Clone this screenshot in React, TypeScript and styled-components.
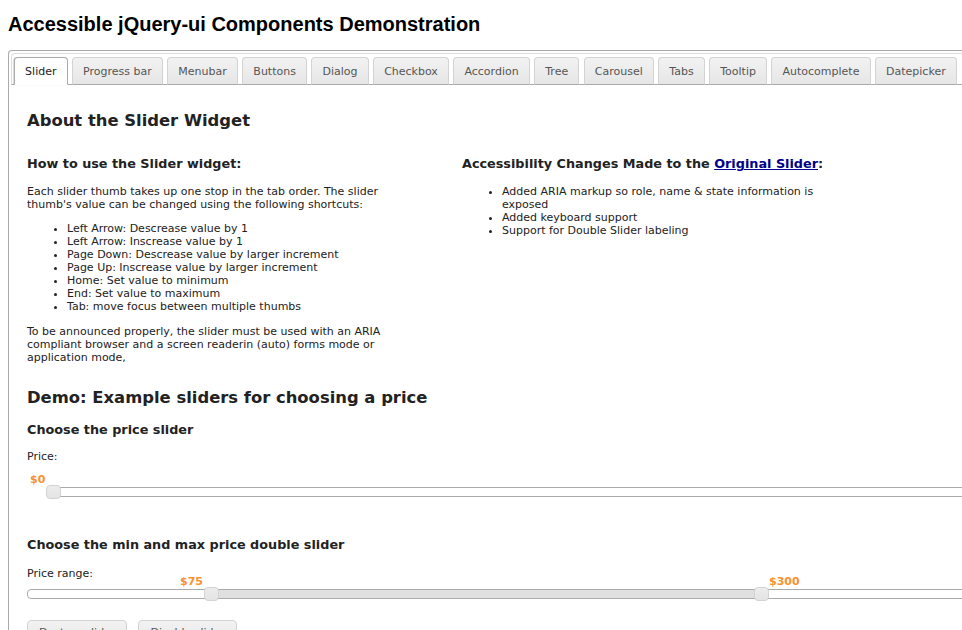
import React from 'react';
import styled, {createGlobalStyle} from 'styled-components';

const GlobalStyle = createGlobalStyle`
    html, body {
        margin: 0;
        padding: 0;
        overflow: hidden;
        background: #fff;
    }
    body {
        font-family: "DejaVu Sans", Verdana, sans-serif;
        font-size: 11px;
        line-height: 13px;
        color: #222;
    }
`

const tabNames = [
    "Slider", "Progress bar", "Menubar", "Buttons", "Dialog", "Checkbox", "Accordion",
    "Tree", "Carousel", "Tabs", "Tooltip", "Autocomplete", "Datepicker",
];

const shortcuts = [
    "Left Arrow: Descrease value by 1",
    "Left Arrow: Inscrease value by 1",
    "Page Down: Descrease value by larger increment",
    "Page Up: Inscrease value by larger increment",
    "Home: Set value to minimum",
    "End: Set value to maximum",
    "Tab: move focus between multiple thumbs",
];

const changes = [
    "Added ARIA markup so role, name & state information is exposed",
    "Added keyboard support",
    "Support for Double Slider labeling",
];

export default function App() {
    return (
        <Page>
            <GlobalStyle/>
            <Title>Accessible jQuery-ui Components Demonstration</Title>
            <TabsBox>
                <TabNav>
                    {tabNames.map((name, i) => (
                        <Tab key={name} active={i === 0}>{name}</Tab>
                    ))}
                </TabNav>
                <Panel>
                    <SectionTitle>About the Slider Widget</SectionTitle>
                    <Columns>
                        <Column width={"390px"}>
                            <SubTitle>How to use the Slider widget:</SubTitle>
                            <Text>
                                Each slider thumb takes up one stop in the tab order. The slider
                                thumb's value can be changed using the following shortcuts:
                            </Text>
                            <List top={"11px"}>
                                {shortcuts.map(s => <li key={s}>{s}</li>)}
                            </List>
                            <Text top={"12px"}>
                                To be announced properly, the slider must be used with an ARIA
                                compliant browser and a screen readerin (auto) forms mode or
                                application mode,
                            </Text>
                        </Column>
                        <Column width={"392px"}>
                            <SubTitle>
                                Accessibility Changes Made to the <Link href="#">Original Slider</Link>:
                            </SubTitle>
                            <List top={"13px"}>
                                {changes.map(s => <li key={s}>{s}</li>)}
                            </List>
                        </Column>
                    </Columns>

                    <SectionTitle top={"24px"}>Demo: Example sliders for choosing a price</SectionTitle>
                    <SubTitle top={"14px"}>Choose the price slider</SubTitle>
                    <Label>Price:</Label>
                    <Track indent={"26px"} top={"24px"}>
                        <ValueLabel left={-24}>$0</ValueLabel>
                        <Handle left={-8}/>
                    </Track>

                    <SubTitle top={"40px"}>Choose the min and max price double slider</SubTitle>
                    <Label top={"14px"}>Price range:</Label>
                    <Track indent={"0"} top={"9px"}>
                        <Range style={{left: 183, width: 733 - 183}}/>
                        <ValueLabel left={152}>$75</ValueLabel>
                        <Handle left={176}/>
                        <ValueLabel left={741}>$300</ValueLabel>
                        <Handle left={726}/>
                    </Track>

                    <Buttons>
                        <Button type={"button"}>Destroy slider</Button>
                        <Button type={"button"}>Disable slider</Button>
                    </Buttons>
                </Panel>
            </TabsBox>
        </Page>
    );
}

const Page = styled.div`
    padding: 12px 0 0 8px;
    width: 1100px;
`

const Title = styled.h1`
    margin: 0 0 14px;
    font-family: "Liberation Sans", Arial, sans-serif;
    font-size: 20px;
    line-height: 24px;
    font-weight: 700;
    color: #000;
`

const TabsBox = styled.div`
    width: 1010px;
    border: 1px solid #aaa;
    border-right: none;
    border-radius: 4px 0 0 0;
    padding: 2px 0 0 2px;
`

const TabNav = styled.ul`
    display: flex;
    gap: 4.4px;
    list-style: none;
    margin: 0;
    padding: 3px 2px 0;
    border: 1px solid #ddd;
    border-bottom: 1px solid #aaa;
    border-radius: 4px 0 0 0;
    background: #fff;
`

const Tab = styled.li<{active?: boolean}>`
    margin-bottom: -1px;
    padding: 7px 10.1px 6px;
    font-size: 11px;
    line-height: 13px;
    white-space: nowrap;
    border: 1px solid ${p => p.active ? "#aaa" : "#d3d3d3"};
    border-bottom: ${p => p.active ? "1px solid #fff" : "1px solid #aaa"};
    border-radius: 4px 4px 0 0;
    color: ${p => p.active ? "#212121" : "#555"};
    background: ${p => p.active ? "#fff" : "linear-gradient(#f2f2f2, #e6e6e6)"};
    box-shadow: ${p => p.active ? "-1px 0 1px rgba(0,0,0,0.15)" : "none"};
`

const Panel = styled.div`
    padding: 26px 16px 40px;
`

const SectionTitle = styled.h2<{top?: string}>`
    margin: ${p => p.top ?? "0"} 0 0;
    font-size: 16.4px;
    line-height: 20px;
    font-weight: 700;
    color: #222;
`

const Columns = styled.div`
    display: flex;
    gap: 45px;
    margin-top: 25px;
`

const Column = styled.div<{width: string}>`
    width: ${p => p.width};
`

const SubTitle = styled.h3<{top?: string}>`
    margin: ${p => p.top ?? "0"} 0 0;
    font-size: 12.8px;
    line-height: 16px;
    font-weight: 700;
    color: #222;
`

const Link = styled.a`
    color: #00008b;
    text-decoration: underline;
`

const Text = styled.p<{top?: string}>`
    margin: ${p => p.top ?? "13px"} 0 0;
`

const List = styled.ul<{top: string}>`
    margin: ${p => p.top} 0 0;
    padding: 0 0 0 40px;
`

const Label = styled.div<{top?: string}>`
    margin-top: ${p => p.top ?? "12px"};
`

const Track = styled.div<{indent: string; top: string}>`
    position: relative;
    height: 8px;
    margin: ${p => p.top} 0 0 ${p => p.indent};
    border: 1px solid #aaa;
    border-radius: 4px;
    background: #fff;
`

const Range = styled.div`
    position: absolute;
    top: 0;
    height: 100%;
    background: #e0e0e0;
`

const Handle = styled.span<{left: number}>`
    position: absolute;
    top: -3px;
    left: ${p => p.left}px;
    width: 13px;
    height: 12px;
    border: 1px solid #d3d3d3;
    border-radius: 4px;
    background: linear-gradient(#ececec, #e4e4e4);
`

const ValueLabel = styled.span<{left: number}>`
    position: absolute;
    top: -15px;
    left: ${p => p.left}px;
    font-weight: 700;
    color: #f7922f;
`

const Buttons = styled.div`
    display: flex;
    gap: 11px;
    margin-top: 21px;
`

const Button = styled.button`
    padding: 5px 11px 8px;
    font-family: "DejaVu Sans", Verdana, sans-serif;
    font-size: 11px;
    line-height: 13px;
    color: #555;
    border: 1px solid #d3d3d3;
    border-radius: 4px;
    background: linear-gradient(#f2f2f2, #e6e6e6);
`
